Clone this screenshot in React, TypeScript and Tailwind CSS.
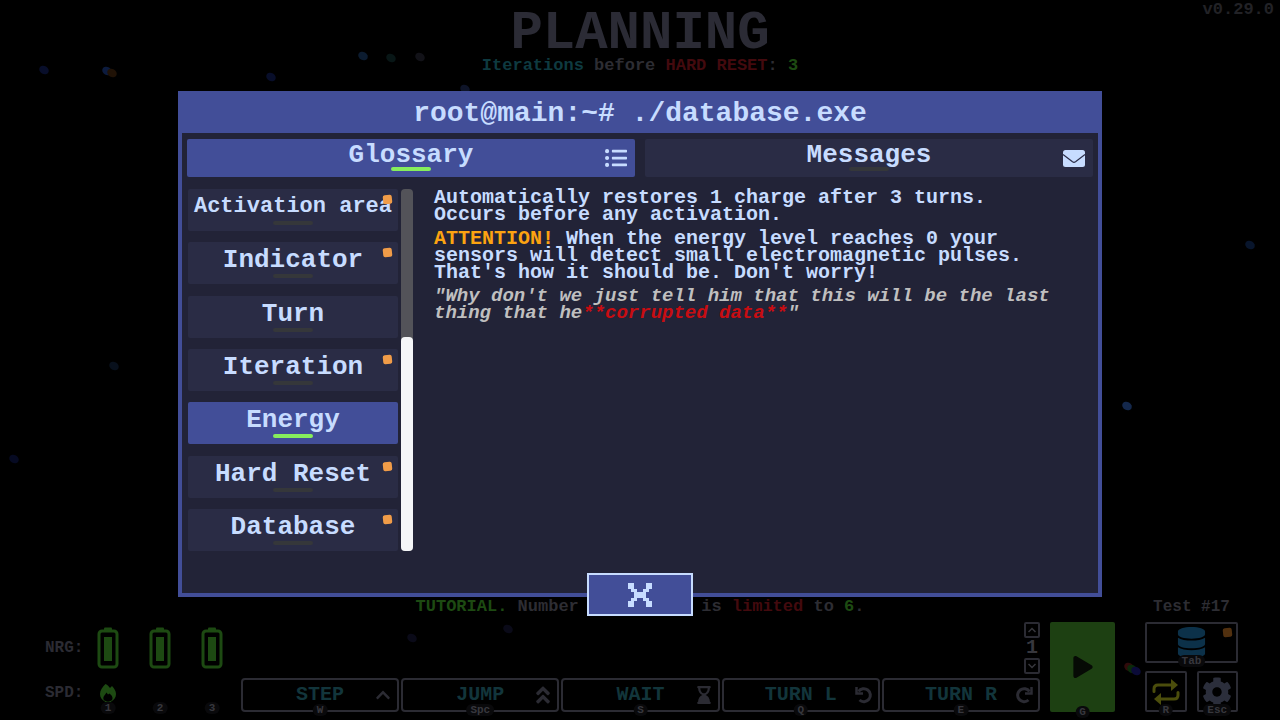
import type { ReactNode } from 'react';
import { FaAngleDoubleUp, FaChevronUp, FaCog, FaDatabase, FaHourglassEnd, FaListUl, FaPlay } from 'react-icons/fa';

const entries = [
  { label: 'Activation area', unread: true, small: true },
  { label: 'Indicator', unread: true },
  { label: 'Turn' },
  { label: 'Iteration', unread: true },
  { label: 'Energy', active: true },
  { label: 'Hard Reset', unread: true },
  { label: 'Database', unread: true }
];

const actions = [
  { label: 'STEP', hotkey: 'W', icon: <FaChevronUp size={16} /> },
  { label: 'JUMP', hotkey: 'Spc', icon: <FaAngleDoubleUp size={22} /> },
  { label: 'WAIT', hotkey: 'S', icon: <FaHourglassEnd size={18} /> },
  { label: 'TURN L', hotkey: 'Q', icon: <TurnIcon /> },
  { label: 'TURN R', hotkey: 'E', icon: <TurnIcon flip /> }
];

const particles = [
  { x: 44, y: 70, color: '#080e2a' },
  { x: 107, y: 71, color: '#0c1b3e' },
  { x: 112, y: 73, color: '#201206' },
  { x: 271, y: 77, color: '#080e2a' },
  { x: 363, y: 56, color: '#0c1c30' },
  { x: 391, y: 58, color: '#081616' },
  { x: 420, y: 57, color: '#121218' },
  { x: 465, y: 89, color: '#0e1428' },
  { x: 114, y: 366, color: '#08101c' },
  { x: 14, y: 459, color: '#060a22' },
  { x: 1127, y: 406, color: '#14284c' },
  { x: 1250, y: 245, color: '#08152c' },
  { x: 412, y: 638, color: '#0a0a18' },
  { x: 508, y: 629, color: '#0a0a18' },
  { x: 1129, y: 667, color: '#300b0b' },
  { x: 1132, y: 669, color: '#0b2a0b' },
  { x: 1136, y: 671, color: '#0b0b38' }
];

function Particles() {
  return (
    <svg viewBox="0 0 1280 720" preserveAspectRatio="xMidYMid slice" className="absolute inset-0 h-full w-full" aria-hidden="true">
      {particles.map((p) => (
        <ellipse key={`${p.x}-${p.y}`} cx={p.x} cy={p.y} rx="5" ry="4" fill={p.color} transform={`rotate(30 ${p.x} ${p.y})`} />
      ))}
    </svg>
  );
}

function TurnIcon({ flip = false }: { flip?: boolean }) {
  return (
    <svg width="18" height="18" viewBox="0 0 18 18" fill="none" stroke="currentColor" strokeWidth="3" className={flip ? '-scale-x-100' : ''} aria-hidden="true">
      <path d="M3.5 5.5A6.5 6.5 0 1 1 4.5 14" />
      <path d="M1.5 1v6.5H8" strokeWidth="2.5" />
    </svg>
  );
}

function StepperIcon({ down = false }: { down?: boolean }) {
  return (
    <svg width="8" height="6" viewBox="0 0 8 6" fill="none" stroke="currentColor" className={down ? 'rotate-180' : ''} aria-hidden="true">
      <path d="M.5 5L4 1.500 7.500 5" strokeWidth="1.500" />
    </svg>
  );
}

function BatteryIcon() {
  return (
    <svg width="22" height="42" viewBox="0 0 22 42" aria-hidden="true">
      <path d="M7 1.5Q7 .5 8 .5h6q1 0 1 1V4H7z" fill="#1d4a12" />
      <rect x="2" y="4" width="18" height="36" rx="3" fill="none" stroke="#1d4a12" strokeWidth="3" />
      <rect x="7" y="10" width="8" height="24" fill="#1d4a12" />
    </svg>
  );
}

function FlameIcon() {
  return (
    <svg width="18" height="18" viewBox="0 0 18 18" aria-hidden="true">
      <path
        fill="#1d4a12"
        d="M6.500 0C3.500 3 1 6 1 10c0 3.500 2 6 5 7.500C4.500 16 4 14.500 4.500 13c.5-1.600 2-2.500 3-4.500l1.500 2 1.500-1c2 1.500 3 3 3 4.500 0 1.300-.5 2.400-1.500 3.500 3-1.500 5-4 5-7.500 0-3-2-6-4-8l-2 2C10 2.500 8.500 1 6.500 0z"
      />
      <path fill="#1d4a12" d="M5 16q4 3.500 8 0l-1 2H6z" />
    </svg>
  );
}

function EnvelopeIcon() {
  return (
    <svg width="22" height="17" viewBox="0 0 22 17" aria-hidden="true">
      <rect width="22" height="17" rx="2.500" fill="#c7dcff" />
      <path d="M0 4.500l9.500 7.300q1.500 1 3 0L22 4.500" fill="none" stroke="#2b2d48" strokeWidth="1.200" />
    </svg>
  );
}

function RestartIcon() {
  return (
    <svg width="28" height="28" viewBox="0 0 28 28" fill="none" stroke="#4b4d0c" strokeWidth="3" strokeLinecap="round" aria-hidden="true">
      <path d="M2 13.500V11q0-4 4-4h14" />
      <path d="M26 14.500V17q0 4-4 4H8" />
      <path d="M19 1l7 6-7 6z" fill="#4b4d0c" stroke="none" />
      <path d="M9 15l-7 6 7 6z" fill="#4b4d0c" stroke="none" />
    </svg>
  );
}

function CloseIcon() {
  return (
    <svg width="24" height="24" viewBox="0 0 8 8" shapeRendering="crispEdges" fill="#c7dcff" aria-hidden="true">
      <path d="M0 0h2v2h1v1h2V2h1V0h2v2H7v1H6v2h1v1h1v2H6V6H5V5H3v1H2v2H0V6h1V5h1V3H1V2H0z" />
    </svg>
  );
}

function Hotkey({ children }: { children: ReactNode }) {
  return (
    <kbd className="absolute -bottom-1.5 left-1/2 -translate-x-1/2 rounded-full bg-[#09090b] px-1 font-[inherit] text-[11px] leading-3 text-[#37373d]">
      {children}
    </kbd>
  );
}

function Underline({ active = false }: { active?: boolean }) {
  return <span className={`h-1 w-10 rounded-full ${active ? 'bg-[#86ee5c]' : 'bg-[#35373a]'}`} />;
}

function Tab({ label, icon, active = false }: { label: string; icon: ReactNode; active?: boolean }) {
  return (
    <button
      role="tab"
      aria-selected={active}
      className={`relative flex h-[38px] flex-1 flex-col items-center rounded-xs pt-1 ${active ? 'bg-[#424e98]' : 'bg-[#2a2c45]'}`}
    >
      <span className="text-[26px] leading-6">{label}</span>
      <Underline active={active} />
      <span className="absolute inset-y-0 right-2 flex items-center">{icon}</span>
    </button>
  );
}

function DatabaseWindow() {
  return (
    <section role="dialog" aria-label="Database" className="relative flex h-[506px] w-full max-w-[924px] flex-col border-4 border-[#424e98] bg-[#222337] text-[#c7dcff]">
      <h2 className="bg-[#424e98] text-center text-[28px] leading-[38px]">root@main:~# ./database.exe</h2>
      <div role="tablist" className="flex gap-2.5 px-[5px] pt-1.5">
        <Tab label="Glossary" icon={<FaListUl size={22} />} active />
        <Tab label="Messages" icon={<EnvelopeIcon />} />
      </div>
      <div className="flex pt-3 pl-1.5">
        <nav className="flex h-[362px] w-[210px] flex-col justify-between">
          {entries.map((entry) => (
            <button
              key={entry.label}
              className={`relative flex h-[42px] flex-col items-center rounded-xs pt-1 ${entry.active ? 'bg-[#424e98]' : 'bg-[#2a2c45]'}`}
            >
              <span className={`leading-7 whitespace-nowrap ${entry.small ? 'text-[22px]' : 'text-[26px]'}`}>{entry.label}</span>
              <Underline active={entry.active} />
              {entry.unread && <span className="absolute top-1.5 right-1.5 size-[9px] -rotate-6 rounded-xs bg-[#f09c48]" />}
            </button>
          ))}
        </nav>
        <div className="ml-[3px] flex w-3 flex-col justify-end rounded-sm bg-[#535359]">
          <div className="h-[214px] rounded-sm bg-[#f5f6f8]" />
        </div>
        <article className="flex flex-1 flex-col gap-[7px] pr-2 pl-[21px] text-xl leading-[17px]">
          <p>
            Automatically restores 1 charge after 3 turns.
            <br />
            Occurs before any activation.
          </p>
          <p>
            <span className="text-[#fca311]">ATTENTION!</span> When the energy level reaches 0 your sensors will detect small electromagnetic pulses. That's how it should be. Don't worry!
          </p>
          <p className="text-[19px] leading-[17px] text-[#bfbfbf] italic">
            "Why don't we just tell him that this will be the last thing that he<span className="text-[#c80d12]">**corrupted data**</span>"
          </p>
        </article>
      </div>
      <button
        aria-label="Close"
        className="absolute -bottom-[23px] left-1/2 flex h-[43px] w-[106px] -translate-x-1/2 items-center justify-center border-2 border-[#c7dcff] bg-[#424e98]"
      >
        <CloseIcon />
      </button>
    </section>
  );
}

function Status() {
  return (
    <div className="grid w-[196px] grid-cols-[37px_repeat(3,52px)] items-center pb-1 text-base text-[#2b2b33]">
      <span>NRG:</span>
      {[1, 2, 3].map((n) => (
        <span key={n} className="flex h-[52px] items-center justify-center">
          <BatteryIcon />
        </span>
      ))}
      <span className="pt-1">SPD:</span>
      {[1, 2, 3].map((n) => (
        <span key={n} className="relative flex h-[34px] items-center justify-center pt-1">
          {n === 1 && <FlameIcon />}
          <Hotkey>{n}</Hotkey>
        </span>
      ))}
    </div>
  );
}

export default function App() {
  return (
    <div className="relative flex h-screen min-h-[720px] flex-col overflow-hidden bg-black font-['Liberation_Mono',monospace] font-bold">
      <Particles />
      <header className="relative text-center">
        <h1 className="pt-2.5 text-[54px] leading-[48px] text-[#2b2b35]">PLANNING</h1>
        <p className="text-[17px] leading-4 text-[#2d2d33]">
          <span className="text-[#0e3a40]">Iterations</span> before <span className="text-[#430a0e]">HARD RESET</span>: <span className="text-[#1d4a12]">3</span>
        </p>
        <span className="absolute top-0 right-1.5 text-[17px] leading-5 text-[#222226]">v0.29.0</span>
      </header>

      <footer className="relative mt-auto pb-2">
        <div className="grid grid-cols-[1fr_auto_1fr] items-center pb-1.5 text-[17px] leading-[18px] text-[#2d2d33]">
          <p className="col-start-2">
            <span className="text-[#1d4a12]">TUTORIAL.</span> Number of actions is <span className="text-[#430a0e]">limited</span> to <span className="text-[#1d4a12]">6</span>.
          </p>
          <p className="mr-[42px] w-[93px] justify-self-end text-center text-base leading-[18px]">Test #17</p>
        </div>
        <div className="flex items-end pr-[42px] pl-[45px]">
          <Status />
          <div className="flex flex-1 flex-col gap-1">
            <div className="flex w-4 flex-col items-center gap-0.5 self-end text-xl leading-4 text-[#37373d]">
              <button aria-label="More iterations" className="flex size-4 items-center justify-center rounded-xs border-2 border-[#2b2b33]">
                <StepperIcon />
              </button>
              <span>1</span>
              <button aria-label="Fewer iterations" className="flex size-4 items-center justify-center rounded-xs border-2 border-[#2b2b33]">
                <StepperIcon down />
              </button>
            </div>
            <div className="flex gap-0.5">
              {actions.map((action) => (
                <button key={action.label} className="relative flex h-[34px] flex-1 items-center justify-center rounded-sm border-2 border-[#2b2b33] text-xl text-[#12353b]">
                  {action.label}
                  <span className="absolute inset-y-0 right-1 flex w-5 items-center justify-center text-[#2b2b33]">{action.icon}</span>
                  <Hotkey>{action.hotkey}</Hotkey>
                </button>
              ))}
            </div>
          </div>
          <button aria-label="Run" className="relative ml-2.5 flex h-[90px] w-[65px] items-center justify-center rounded-xs bg-[#1d4012] text-[#060a05]">
            <FaPlay size={22} />
            <Hotkey>G</Hotkey>
          </button>
          <div className="ml-[30px] grid w-[93px] grid-cols-2 gap-x-2.5 gap-y-2">
            <button aria-label="Database" className="relative col-span-2 flex h-[41px] items-center justify-center rounded-xs border-2 border-[#2b2b33] text-[#0c3149]">
              <FaDatabase size={31} />
              <span className="absolute top-1 right-1 size-[9px] -rotate-6 rounded-xs bg-[#51300f]" />
              <Hotkey>Tab</Hotkey>
            </button>
            <button aria-label="Restart" className="relative flex h-[41px] items-center justify-center rounded-xs border-2 border-[#2b2b33]">
              <RestartIcon />
              <Hotkey>R</Hotkey>
            </button>
            <button aria-label="Settings" className="relative flex h-[41px] items-center justify-center rounded-xs border-2 border-[#2b2b33] text-[#2b2e3b]">
              <FaCog size={30} />
              <Hotkey>Esc</Hotkey>
            </button>
          </div>
        </div>
      </footer>

      <div className="absolute inset-0 flex items-start justify-center pt-[91px]">
        <DatabaseWindow />
      </div>
    </div>
  );
}
